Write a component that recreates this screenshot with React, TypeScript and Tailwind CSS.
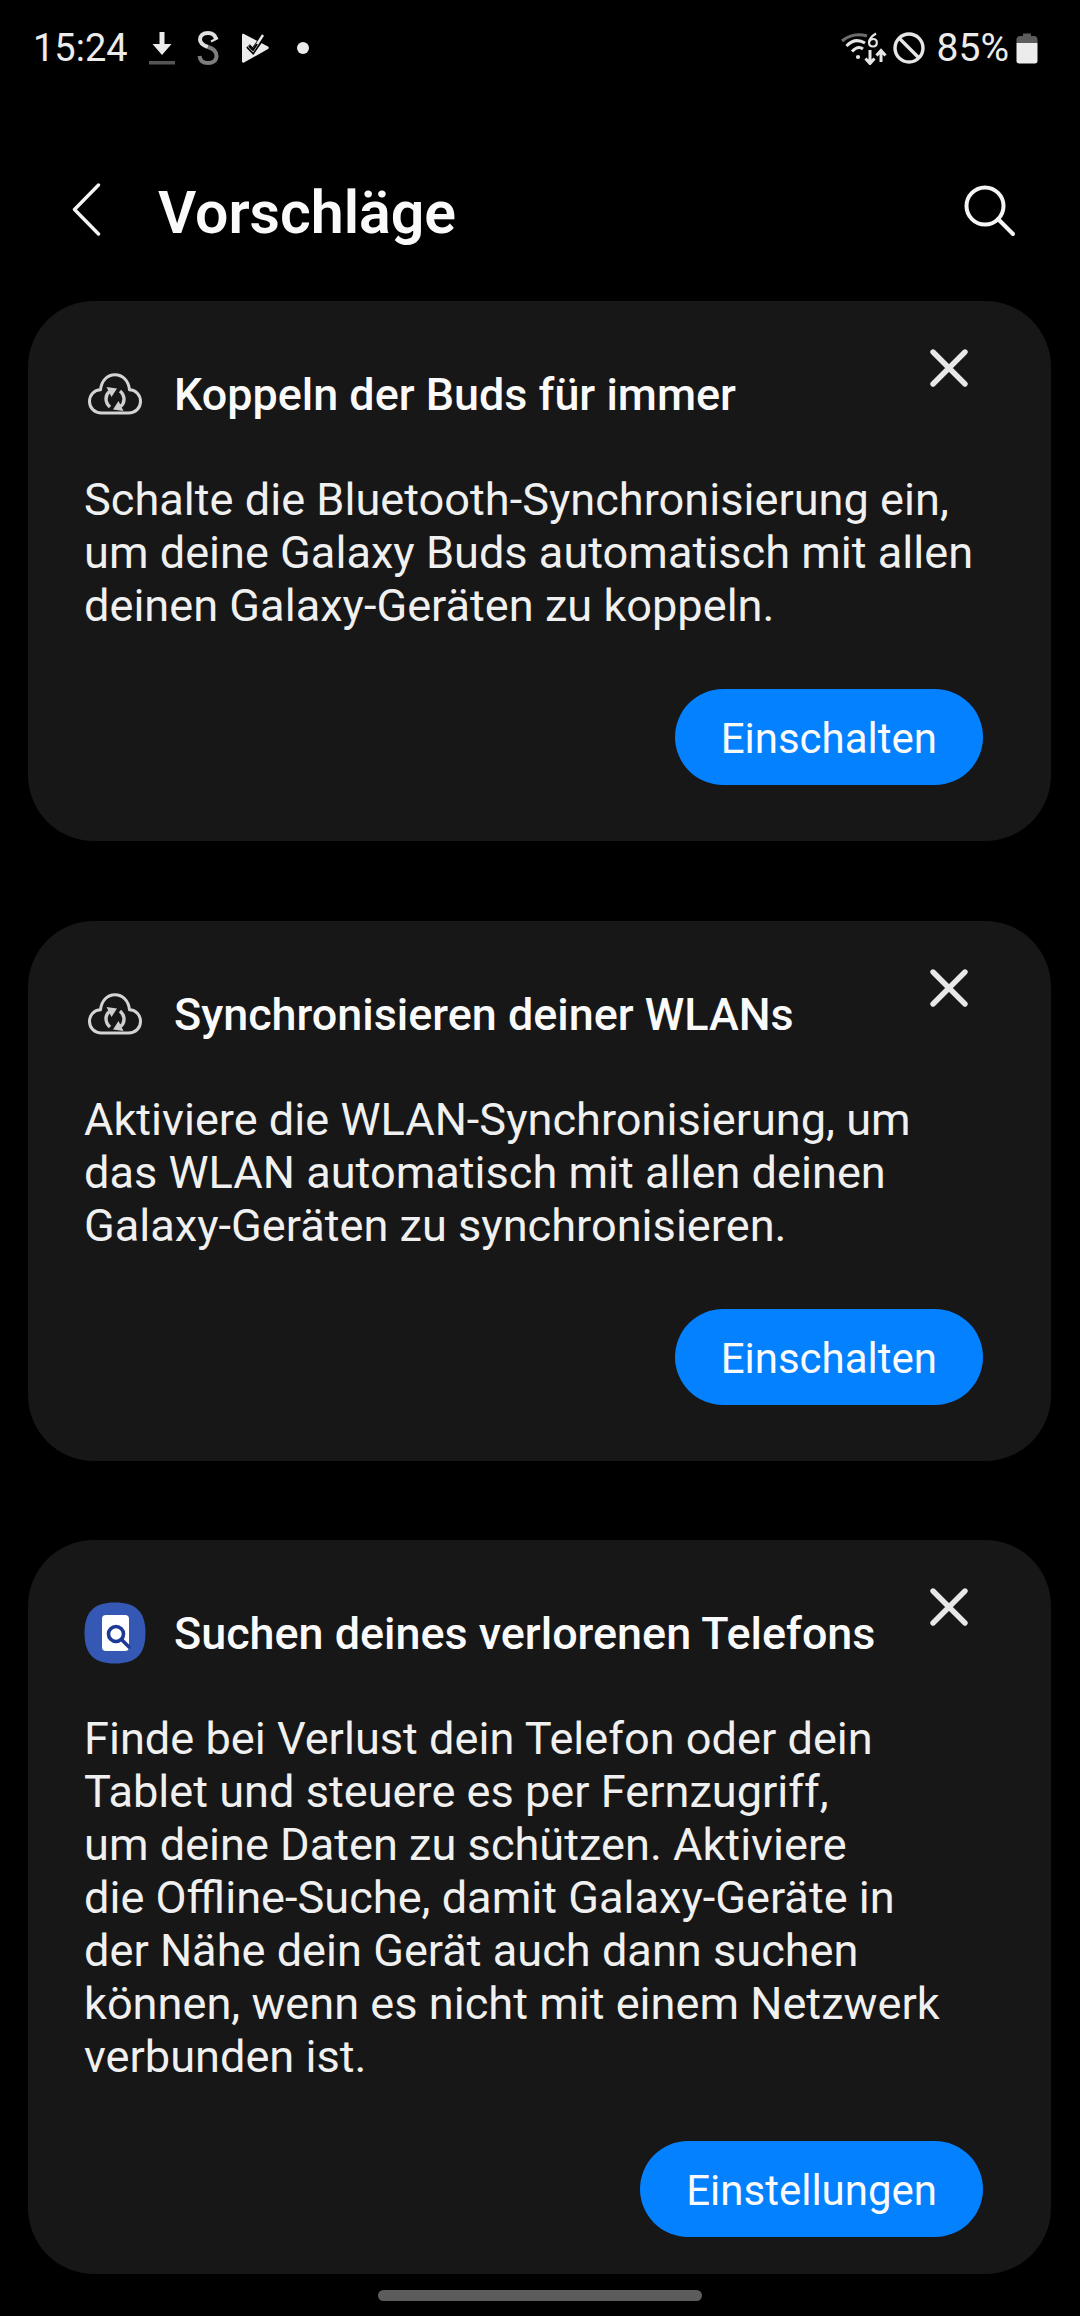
import React from "react";

const font = { fontFamily: "Roboto, 'Noto Sans', sans-serif" };

function CloudIcon() {
  return (
    <svg width="54" height="42" viewBox="0 0 54 42" fill="none" className="flex-none">
      <path d="M13.5 40 H40.5 C47.5 40 52.5 35 52.5 28.5 C52.5 22 47.8 17 41.5 16.8 C40.5 7.5 34.5 1.8 27 1.8 C19.5 1.8 13.5 7.5 12.5 16.8 C6.2 17 1.5 22 1.5 28.5 C1.5 35 6.5 40 13.5 40 Z" stroke="#d4d4d4" strokeWidth="3" strokeLinejoin="round" />
      <path d="M22 34 C16.5 29 17 22 21.5 18.5" stroke="#cfcfcf" strokeWidth="3.4" />
      <path d="M18.5 14 L29 15.5 L23.5 24 Z" fill="#cfcfcf" />
      <path d="M32 18 C37.5 23 37 30 32.5 33.5" stroke="#cfcfcf" strokeWidth="3.4" />
      <path d="M35.5 38 L25 36.5 L30.5 28 Z" fill="#cfcfcf" />
    </svg>
  );
}

function FindIcon() {
  return (
    <svg width="62" height="62" viewBox="0 0 62 62" className="flex-none">
      <path d="M31 0.5 C52 0.5 61.5 10 61.5 31 C61.5 52 52 61.5 31 61.5 C10 61.5 0.5 52 0.5 31 C0.5 10 10 0.5 31 0.5 Z" fill="#3558b5" />
      <rect x="18" y="13" width="27" height="36" rx="4" fill="#ffffff" />
      <circle cx="32" cy="32" r="7.5" fill="none" stroke="#1f3a94" strokeWidth="3.6" />
      <path d="M37.5 37.5 L45 45" stroke="#1f3a94" strokeWidth="3.6" strokeLinecap="round" />
    </svg>
  );
}

function CloseIcon() {
  return (
    <svg width="40" height="40" viewBox="0 0 40 40" fill="none" className="flex-none">
      <path d="M4 4 L36 36 M36 4 L4 36" stroke="#e8e8e8" strokeWidth="5.4" strokeLinecap="round" />
    </svg>
  );
}

function Card({ icon, title, children, action, last }: { icon: React.ReactNode; title: string; children: React.ReactNode; action: string; last?: boolean }) {
  return (
    <section className={last ? "ml-[28px] mr-[29px] rounded-[66px] bg-[#171717] pl-[56px] pr-[68px] pt-[48px] pb-[37px]" : "ml-[28px] mr-[29px] rounded-[66px] bg-[#171717] pl-[56px] pr-[68px] pt-[48px] pb-[56px]"}>
      <div className="flex h-[90px] items-start">
        <div className={last ? "mt-[20px] flex h-[50px] w-[90px] flex-none items-center" : "mt-[20px] flex h-[50px] w-[90px] flex-none items-center pl-[4px]"}>{icon}</div>
        <h2 className="mt-[21px] text-[44.9px] leading-[50px] font-medium text-[#fafafa] whitespace-nowrap">{title}</h2>
        <div className="ml-auto mr-[14px] -mt-[1px]"><CloseIcon /></div>
      </div>
      <p className="mt-[34px] text-[45.15px] leading-[53px] text-[#f0f0f0] whitespace-nowrap">{children}</p>
      <div className={last ? "mt-[58px] flex justify-end" : "mt-[57px] flex justify-end"}>
        <button className="flex h-[96px] items-center rounded-full bg-[#0381fe] px-[46px] pt-[3px] text-[42px] text-[#fafafa]">{action}</button>
      </div>
    </section>
  );
}

export default function App() {
  return (
    <div className="flex h-[2316px] w-[1080px] flex-col overflow-hidden bg-black" style={font}>
      <div className="flex h-[96px] flex-none items-center pl-[33px] pr-[42px] text-[#ececec]">
        <span className="text-[38px] leading-none">15:24</span>
        <svg width="26" height="34" viewBox="0 0 26 34" className="ml-[21px] flex-none">
          <path d="M10.5 1 H15.5 V13 H22.5 L13 24 L3.5 13 H10.5 Z" fill="#ececec" />
          <rect x="0" y="30" width="26" height="3.5" fill="#555555" />
        </svg>
        <svg width="22" height="34" viewBox="0 0 22 34" fill="none" className="ml-[22px] flex-none">
          <path d="M19 8 C18 3.5 15 2 11 2 C6 2 3 4.5 3 8.5 C3 12.5 6.5 14.5 11 16" stroke="#e0e0e0" strokeWidth="4" />
          <path d="M11 16 C16 17.5 19.5 20 19.5 25 C19.5 29.5 16 32 11 32 C6 32 3 29.5 2.5 25" stroke="#7d7d7d" strokeWidth="4" />
          <path d="M21 7 L14 10.5" stroke="#e0e0e0" strokeWidth="2" />
        </svg>
        <svg width="28" height="30" viewBox="0 0 28 30" className="ml-[22px] flex-none">
          <path d="M1 2 C1 1 2 0.5 3 1 L27 13.5 C28 14 28 15.5 27 16 L3 29.5 C2 30 1 29.5 1 28.5 Z" fill="#ececec" />
          <path d="M7 13 L12 18 L23 2" fill="none" stroke="#000000" strokeWidth="5" />
          <path d="M7.5 13 L12 17.5 L22 2" fill="none" stroke="#ececec" strokeWidth="2.4" />
          <path d="M8 13 L12 17 L16 11" fill="none" stroke="#000000" strokeWidth="2" />
        </svg>
        <span className="ml-[28px] h-[12px] w-[12px] rounded-full bg-[#ececec]" />
        <svg width="46" height="33" viewBox="0 0 46 33" fill="none" className="ml-auto flex-none">
          <path d="M1 9 Q12 0 26 4" stroke="#6d6d6d" strokeWidth="3" />
          <path d="M5.5 14 Q14 5 24 11" stroke="#e6e6e6" strokeWidth="3" />
          <path d="M11 19.5 Q17 13 22 17" stroke="#e6e6e6" strokeWidth="3" />
          <circle cx="17" cy="25" r="2.1" fill="#e6e6e6" />
          <path d="M35 1.5 C31 4 28 7 28 10.5 C28 13 29.8 14.5 32 14.5 C34.2 14.5 35.8 13 35.8 10.5 C35.8 8.5 34.2 7 32 7 C30 7 28.5 8.5 28 10.5" stroke="#e6e6e6" strokeWidth="2.2" />
          <path d="M29 18 V31 M24.5 26.5 L29 31.5 L33.5 26.5" stroke="#e6e6e6" strokeWidth="3" />
          <path d="M40 30 V19 M35.5 23.5 L40 18.5 L44.5 23.5" stroke="#e6e6e6" strokeWidth="3" />
        </svg>
        <svg width="32" height="32" viewBox="0 0 32 32" fill="none" className="ml-[6px] flex-none">
          <circle cx="16" cy="16" r="14" stroke="#e6e6e6" strokeWidth="3.4" />
          <path d="M6 6 L26 26" stroke="#e6e6e6" strokeWidth="3.4" />
        </svg>
        <span className="ml-[12px] text-[39px] leading-none">85%</span>
        <svg width="22" height="31" viewBox="0 0 22 31" className="ml-[7px] flex-none">
          <path d="M7 0.5 H15 V3 H18 C20 3 21.5 4.5 21.5 6.5 V10 H0.5 V6.5 C0.5 4.5 2 3 4 3 H7 Z" fill="#5c5c5c" />
          <path d="M0.5 10 H21.5 V28 C21.5 29.5 20.5 30.5 19 30.5 H3 C1.5 30.5 0.5 29.5 0.5 28 Z" fill="#ececec" />
        </svg>
      </div>

      <header className="mt-[48px] mb-[33px] flex h-[124px] flex-none items-center">
        <svg width="30" height="54" viewBox="0 0 30 54" fill="none" className="ml-[72px] mt-[8px] flex-none">
          <path d="M26.5 2 L2.5 26.5 L26.5 51" stroke="#f5f5f5" strokeWidth="3.4" strokeLinecap="round" strokeLinejoin="round" />
        </svg>
        <h1 className="ml-[56px] mt-[12px] text-[59px] leading-none font-semibold text-[#fafafa]">Vorschläge</h1>
        <svg width="52" height="52" viewBox="0 0 52 52" fill="none" className="ml-auto mr-[64px] mt-[9px] flex-none">
          <circle cx="21" cy="21" r="18.5" stroke="#f5f5f5" strokeWidth="4" />
          <path d="M34 34 L49 49" stroke="#f5f5f5" strokeWidth="4" strokeLinecap="round" />
        </svg>
      </header>

      <div className="flex flex-col gap-[79.5px]">
        <Card icon={<CloudIcon />} title="Koppeln der Buds für immer" action="Einschalten">
          Schalte die Bluetooth-Synchronisierung ein,<br />
          um deine Galaxy Buds automatisch mit allen<br />
          deinen Galaxy-Geräten zu koppeln.
        </Card>
        <Card icon={<CloudIcon />} title="Synchronisieren deiner WLANs" action="Einschalten">
          Aktiviere die WLAN-Synchronisierung, um<br />
          das WLAN automatisch mit allen deinen<br />
          Galaxy-Geräten zu synchronisieren.
        </Card>
        <Card icon={<FindIcon />} title="Suchen deines verlorenen Telefons" action="Einstellungen" last>
          Finde bei Verlust dein Telefon oder dein<br />
          Tablet und steuere es per Fernzugriff,<br />
          um deine Daten zu schützen. Aktiviere<br />
          die Offline-Suche, damit Galaxy-Geräte in<br />
          der Nähe dein Gerät auch dann suchen<br />
          können, wenn es nicht mit einem Netzwerk<br />
          verbunden ist.
        </Card>
      </div>

      <div className="mt-[16px] flex justify-center">
        <div className="h-[11px] w-[324px] rounded-full bg-[#5c5c5c]" />
      </div>
    </div>
  );
}
